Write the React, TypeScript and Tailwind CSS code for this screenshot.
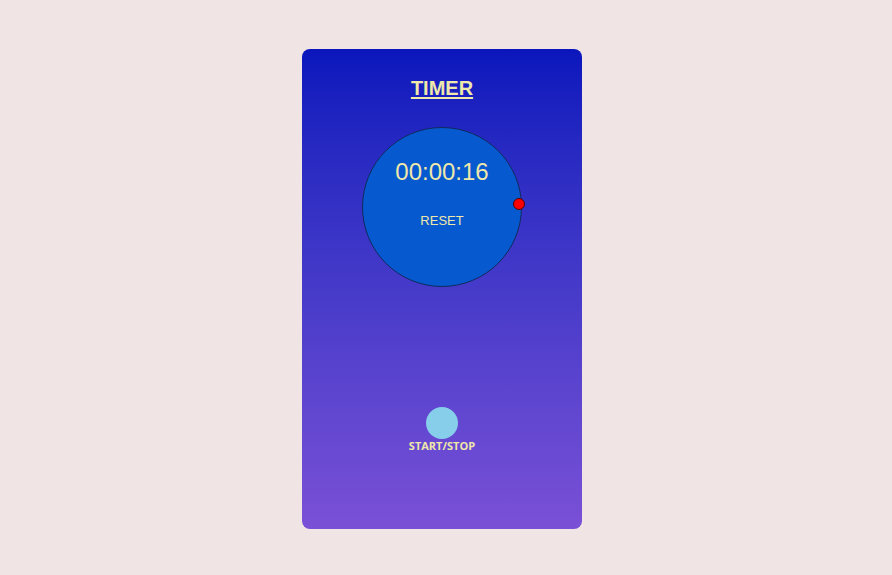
export default function App() {
  return (
    <div className="flex min-h-[575px] justify-center bg-[#f0e4e4] pr-[8px] pt-[49px]">
      <div className="flex h-[480px] w-[280px] flex-col items-center rounded-lg bg-gradient-to-b from-[#0a16bc] to-[#7a50d6] font-['Liberation_Sans',Arial,sans-serif] text-[#eee8aa]">
        <h1 className="pt-[28px] text-[20px] leading-[23px] font-bold underline decoration-2 underline-offset-[2px]">TIMER</h1>

        <div className="relative mt-[27px] flex h-[160px] w-[160px] flex-col items-center rounded-full border border-[#102a5e] bg-[#0659cf]">
          <div className="mt-[30px] text-[24px] leading-[28px]">00:00:16</div>
          <div className="mt-[27px] text-[13px] leading-[15px]">RESET</div>
          <span className="absolute top-[70px] left-[150px] h-[12px] w-[12px] rounded-full border border-[#550000] bg-[#ff0000]" />
        </div>

        <div className="mt-[120px] flex flex-col items-center">
          <button className="h-[32px] w-[32px] rounded-full bg-[#87ceeb]" />
          <span className="font-['Open_Sans',sans-serif] text-[11px] leading-[13px] font-bold">START/STOP</span>
        </div>
      </div>
    </div>
  );
}
